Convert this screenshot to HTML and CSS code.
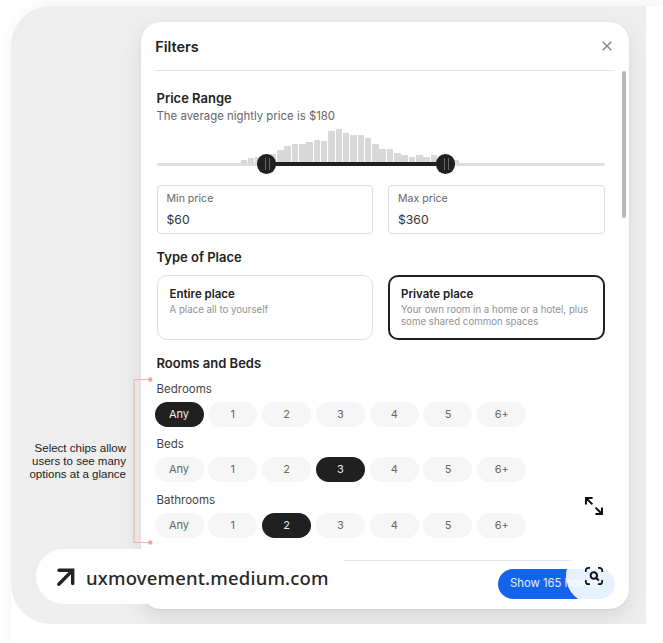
FILE: index.html
```html
<!DOCTYPE html>
<html lang="en">
<head>
<meta charset="utf-8">
<title>Filters</title>
<link rel="stylesheet" href="styles.css">
</head>
<body>
<div class="page">
<main class="stage">
  <p class="note"><span>Select chips allow</span><br><span>users to see many</span><br><span>options at a glance</span></p>
  <section class="card">
    <header class="card-head">
      <h1>Filters</h1>
      <svg class="close" viewBox="0 0 10 10"><path d="M.7.7l8.6 8.6M9.3.7L.7 9.3"/></svg>
    </header>
    <div class="body">
      <h2 class="price-title">Price Range</h2>
      <p class="sub"><span>The average nightly price is $180</span></p>
      <div class="range">
        <div class="bars" id="bars"></div>
        <div class="track"></div>
        <div class="selected"></div>
        <i class="handle low"></i><i class="handle high"></i>
      </div>
      <div class="pair fields">
        <div class="field"><label>Min price</label><b>$60</b></div>
        <div class="field"><label>Max price</label><b>$360</b></div>
      </div>
      <h2 class="type-title">Type of Place</h2>
      <div class="pair">
        <div class="place"><h3>Entire place</h3><p>A place all to yourself</p></div>
        <div class="place active"><h3>Private place</h3><p>Your own room in a home or a hotel, plus<br>some shared common spaces</p></div>
      </div>
      <h2 class="rooms-title">Rooms and Beds</h2>
      <div class="group"><h4>Bedrooms</h4><div class="chips"><span class="on">Any</span><span>1</span><span>2</span><span>3</span><span>4</span><span>5</span><span>6+</span></div></div>
      <div class="group"><h4>Beds</h4><div class="chips"><span>Any</span><span>1</span><span>2</span><span class="on">3</span><span>4</span><span>5</span><span>6+</span></div></div>
      <div class="group"><h4>Bathrooms</h4><div class="chips"><span>Any</span><span>1</span><span class="on">2</span><span>3</span><span>4</span><span>5</span><span>6+</span></div></div>
    </div>
    <footer class="foot">
      <span class="clear">Clear all</span>
      <span class="show">Show 165 homes</span>
    </footer>
    <div class="scrollbar"></div>
  </section>
  <svg class="bracket" viewBox="0 0 20 168"><path d="M17 2.5H1V165.5H17"/><circle cx="17.3" cy="2.5" r="2.2"/><circle cx="17.3" cy="165.5" r="2.2"/></svg>
  <div class="source">
    <svg viewBox="0 0 20 20"><path d="M3 3.2H16.7V16.6M16.3 3.6L2.8 17.2"/></svg>
    <span>uxmovement.medium.com</span>
  </div>
  <div class="round expand">
    <svg viewBox="0 0 20 20"><path d="M2 8.6V2H8.6M2 2L8.4 8.4M18 11.4V18H11.4M18 18L11.6 11.6"/><path class="tip" d="M1 1H7L1 7ZM19 19H13L19 13Z"/></svg>
  </div>
  <div class="round lens">
    <svg viewBox="0 0 20 20"><path class="frame" d="M1.8 6V4.6A2.8 2.8 0 0 1 4.6 1.8H6M14 1.8h1.4a2.8 2.8 0 0 1 2.8 2.8V6M18.2 14v1.4a2.8 2.8 0 0 1-2.8 2.8H14M6 18.2H4.6a2.8 2.8 0 0 1-2.8-2.8V14"/><circle cx="9.8" cy="9.5" r="3.2"/><path d="M12 11.7L14.8 14.5"/></svg>
  </div>
</main>
</div>
<script src="bars.js"></script>
</body>
</html>
```
FILE: bars.js
```js
const heights = [2.7, 4.3, 6, 8.7, 9, 12.3, 16.7, 18.5, 18.5, 20.3, 23, 21.7, 31.7, 33.7, 29.7, 27.3, 27.3, 25, 18.3, 14, 14, 9.7, 7.5, 5.3, 7.5, 5.3, 7.5, 5, 4, 3];
document.getElementById('bars').innerHTML = heights.map(h => `<i style="height:${h}px"></i>`).join('');
```
FILE: styles.css
```css
* { box-sizing: border-box; margin: 0; padding: 0; }
body { background: #fff; overflow: hidden; font-family: Inter, "Liberation Sans", sans-serif; color: #222; }
.page { margin: 6px 0 0 11px; height: 637px; background: #fff; border-radius: 40px 0 0 0; box-shadow: 6px 4px 18px 3px rgba(0,0,0,.07); }
.stage { position: relative; display: flex; width: 635px; height: 618px; padding-top: 16px; background: #eee; border-radius: 40px 0 0 40px; overflow: hidden; }
.note { width: 129.5px; flex: none; padding-right: 14.5px; margin-top: 419.7px; text-align: right; white-space: nowrap; font: 11.5px/13.2px "Liberation Sans", sans-serif; color: #222; }
.card { position: relative; width: 488.5px; height: 586.5px; flex: none; background: #fff; border-radius: 20px; box-shadow: 0 8px 24px rgba(0,0,0,.09), 0 1px 2px rgba(0,0,0,.07); }
.card-head { display: flex; align-items: center; justify-content: space-between; height: 49px; margin: 0 14px; padding-left: .7px; border-bottom: 1.5px solid #e4e4e4; }
h1 { font-size: 14.5px; line-height: 18px; font-weight: 600; padding-top: 1px; }
.close { width: 10px; height: 10px; margin-right: 3px; }
.close path { stroke: #858585; stroke-width: 1.4; fill: none; }
.body { padding: 0 24.5px 0 16px; height: 488.5px; }
h2 { font-size: 13px; line-height: 18px; font-weight: 600; }
.price-title { padding-top: 18px; }
.sub { font-size: 11.4px; line-height: 18px; color: #666; }
.range { position: relative; height: 60px; margin-top: -.3px; }
.bars { display: flex; align-items: flex-end; gap: .8px; height: 38px; padding-left: 84px; }
.bars i { width: 6.52px; background: #d8d8d8; }
.track { height: 3px; border-radius: 2px; background: #dedede; }
.selected { position: absolute; left: 110px; width: 179px; top: 37.5px; height: 3.5px; background: #202020; }
.handle { position: absolute; top: 29.5px; width: 19.5px; height: 19.5px; border-radius: 50%; background: #202020; }
.handle::after { content: ""; position: absolute; left: 8px; top: 4px; width: 3.5px; height: 11.5px; border: solid #666; border-width: 0 1px; }
.low { left: 100px; }
.high { left: 279.3px; }
.pair { display: grid; grid-template-columns: 1fr 1fr; gap: 15px; }
.field { height: 49px; border: 1px solid #dcdcdc; border-radius: 4px; padding: 5px 9px; }
.field label, .field b { display: block; font-weight: 400; }
.field label { font-size: 10.6px; line-height: 16px; color: #666; }
.field b { font-size: 12.2px; line-height: 16px; margin-top: 5px; color: #333; }
.type-title { margin: 14px 0 9px; }
.place { height: 65px; border: 1px solid #dedede; border-radius: 10px; padding: 11px 12px; }
.place.active { border: 2px solid #202020; padding: 10px 11px; }
.place h3 { font-size: 11.5px; line-height: 15px; font-weight: 600; }
.place p { font-size: 9.7px; line-height: 11.5px; margin-top: 2.5px; color: #929292; white-space: nowrap; }
.rooms-title { margin: 14px 0 9px; }
.group { height: 55.5px; }
h4 { font-size: 11.5px; line-height: 17px; font-weight: 400; color: #444; }
.chips { display: flex; gap: 4.8px; margin: 4px 0 0 -2px; }
.chips span { width: 49px; height: 25px; flex: none; border-radius: 13px; background: #f6f6f7; text-align: center; font-size: 11px; line-height: 25px; color: #666; }
.chips .on { background: #202020; color: #eee; }
.foot { display: flex; justify-content: space-between; margin: 0 14.5px 0 14px; border-top: 1.5px solid #e5e5e5; padding-top: 8.5px; }
.foot span { height: 29.5px; line-height: 29px; border-radius: 15px; font-size: 11.3px; white-space: nowrap; }
.clear { width: 68px; border: 1px solid #ddd; text-align: center; }
.show { width: 116.5px; padding-left: 12px; background: #1364ed; color: #e6efff; }
.scrollbar { position: absolute; right: 3px; top: 49px; width: 4.5px; height: 147px; border-radius: 3px; background: #b8b8b8; }
.bracket { position: absolute; left: 122px; top: 370.5px; width: 20px; height: 168px; }
.bracket path { fill: none; stroke: #f3b5aa; stroke-width: 1.2; }
.bracket circle { fill: #f0a599; }
.source { position: absolute; left: 25px; top: 543px; width: 313px; height: 55px; border-radius: 28px; background: rgba(255,255,255,.94); display: flex; align-items: center; padding-left: 20px; gap: 10px; font: 500 18.5px/24px "Noto Sans", sans-serif; letter-spacing: .18px; color: #282828; }
.source svg { width: 20px; height: 20px; }
.source path { fill: none; stroke: #222; stroke-width: 3.4; stroke-linecap: round; }
.source span { position: relative; top: 1px; white-space: nowrap; }
.round { position: absolute; left: 555px; width: 56px; height: 56px; border-radius: 50%; background: rgba(255,255,255,.9); display: flex; align-items: center; justify-content: center; }
.round svg { width: 20px; height: 20px; fill: none; stroke: #111; stroke-width: 2; }
.round .tip { fill: #111; stroke: none; }
.expand { top: 472px; }
.lens { top: 542px; }
.lens .frame { stroke-width: 1.7; }
```
